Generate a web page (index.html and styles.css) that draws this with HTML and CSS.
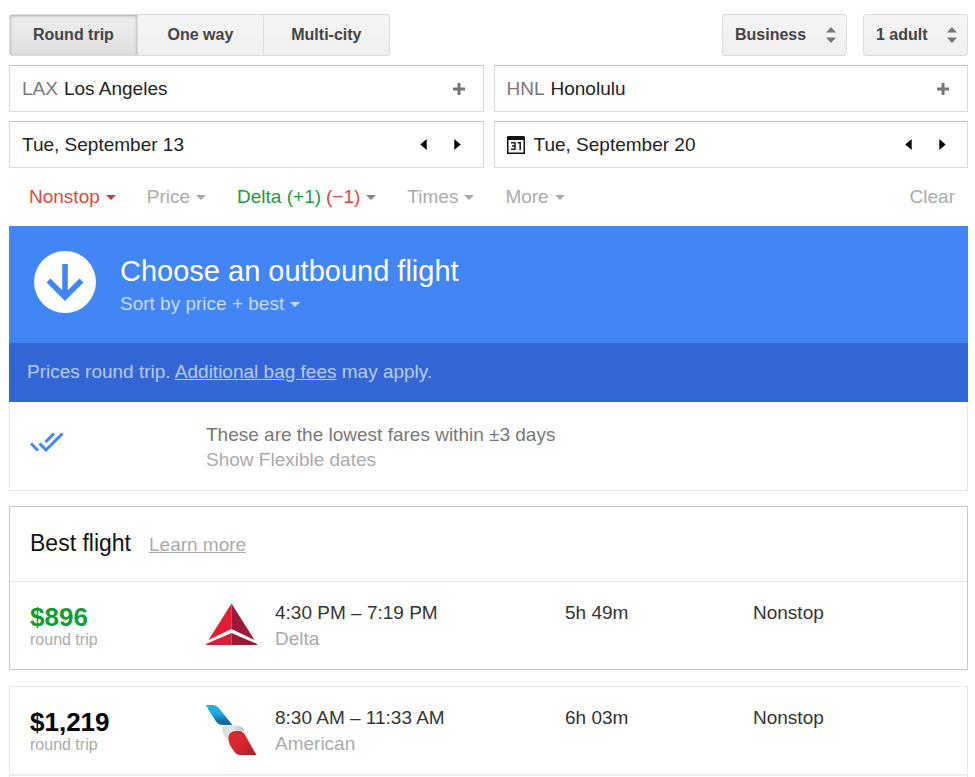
FILE: index.html
```html
<!DOCTYPE html>
<html lang="en">
<head>
<meta charset="utf-8">
<title>Flights</title>
<link rel="stylesheet" href="styles.css">
</head>
<body>
<main class="page">
  <form class="search">
    <div class="toolbar">
      <div class="tabs" role="group" aria-label="Trip type">
        <button type="button" class="tab tab-active" aria-pressed="true">Round trip</button>
        <button type="button" class="tab" aria-pressed="false">One way</button>
        <button type="button" class="tab" aria-pressed="false">Multi-city</button>
      </div>
      <div class="options">
        <div class="picker">
          <select class="picker-select picker-cabin" aria-label="Cabin class"><option>Business</option></select>
          <svg class="picker-arrows" viewBox="0 0 10 18" aria-hidden="true"><path d="M0 6.500L5 1l5 5.500zM0 11.500h10L5 17z"/></svg>
        </div>
        <div class="picker">
          <select class="picker-select picker-people" aria-label="Passengers"><option>1 adult</option></select>
          <svg class="picker-arrows" viewBox="0 0 10 18" aria-hidden="true"><path d="M0 6.500L5 1l5 5.500zM0 11.500h10L5 17z"/></svg>
        </div>
      </div>
    </div>
    <div class="fields">
      <div class="field">
        <label class="code" for="origin">LAX</label>
        <input class="field-input" id="origin" type="text" value="Los Angeles">
        <button type="button" class="add" aria-label="Add origin"><svg viewBox="0 0 12 12"><path d="M4.500 0h3v4.500H12v3H7.500V12h-3V7.500H0v-3h4.500z"/></svg></button>
      </div>
      <div class="field">
        <label class="code" for="destination">HNL</label>
        <input class="field-input" id="destination" type="text" value="Honolulu">
        <button type="button" class="add" aria-label="Add destination"><svg viewBox="0 0 12 12"><path d="M4.500 0h3v4.500H12v3H7.500V12h-3V7.500H0v-3h4.500z"/></svg></button>
      </div>
      <div class="field">
        <input class="field-input" type="text" value="Tue, September 13" aria-label="Departure date">
        <button type="button" class="step" aria-label="Previous day"><svg viewBox="0 0 7 12"><path d="M7 0v12L0 6z"/></svg></button>
        <button type="button" class="step" aria-label="Next day"><svg viewBox="0 0 7 12"><path d="M0 0v12l7-6z"/></svg></button>
      </div>
      <div class="field">
        <svg class="calendar" viewBox="0 0 18 18" aria-hidden="true">
          <path d="M1 0h16l1 1v17H0V1zM1.500 4v12.500h15V4z" fill-rule="evenodd"/>
          <path d="M4 6.700h4v6.600H4M5 10h3M10.500 6.700h2.700v7.300" class="calendar-day"/>
        </svg>
        <input class="field-input" type="text" value="Tue, September 20" aria-label="Return date">
        <button type="button" class="step" aria-label="Previous day"><svg viewBox="0 0 7 12"><path d="M7 0v12L0 6z"/></svg></button>
        <button type="button" class="step" aria-label="Next day"><svg viewBox="0 0 7 12"><path d="M0 0v12l7-6z"/></svg></button>
      </div>
    </div>
    <div class="filters">
      <button type="button" class="filter filter-red">Nonstop<span class="caret"></span></button>
      <button type="button" class="filter">Price<span class="caret"></span></button>
      <button type="button" class="filter filter-airline"><span class="plus">Delta (+1)</span> <span class="minus">(−1)</span><span class="caret"></span></button>
      <button type="button" class="filter">Times<span class="caret"></span></button>
      <button type="button" class="filter">More<span class="caret"></span></button>
      <button type="reset" class="filter filter-clear">Clear</button>
    </div>
  </form>

  <section class="outbound">
    <div class="banner">
      <svg class="banner-icon" viewBox="0 0 62 62" aria-hidden="true">
        <circle cx="31" cy="31" r="31" fill="#fff"/>
        <path d="M31 13v33M14.500 29.500L31 46l16.500-16.500" fill="none" stroke="#4285f4" stroke-width="5.500"/>
      </svg>
      <div>
        <h1 class="banner-title">Choose an outbound flight</h1>
        <button type="button" class="sort">Sort by price + best<span class="caret"></span></button>
      </div>
    </div>
    <p class="fees">Prices round trip. <a class="fees-link" href="#fees">Additional bag fees</a> may apply.</p>
    <div class="notice">
      <svg class="checks" viewBox="0 0 34 22" aria-hidden="true"><path d="M1 12.500l7 7M9.500 12.500l6.500 6.500L32.500 2.500M15.500 11l8.500-8.500"/></svg>
      <div>
        <p class="notice-text">These are the lowest fares within ±3 days</p>
        <a class="notice-link" href="#flexible">Show Flexible dates</a>
      </div>
    </div>
  </section>

  <section class="card card-best">
    <header class="card-header">
      <h2 class="card-title">Best flight</h2>
      <a class="learn" href="#learn">Learn more</a>
    </header>
    <table class="flights" aria-label="Best flight">
      <colgroup><col class="col-price"><col class="col-logo"><col class="col-time"><col class="col-duration"><col></colgroup>
      <tbody>
        <tr>
          <td><div class="price price-best">$896</div><div class="unit">round trip</div></td>
          <td>
            <svg class="logo" viewBox="0 0 52 52" aria-hidden="true">
              <path d="M25.500 3.500V29L2.500 40z" fill="#e31d35"/>
              <path d="M25.500 3.500V29l23 11z" fill="#991b35"/>
              <path d="M25.500 33v12H0v-1z" fill="#d51f38"/>
              <path d="M25.500 33v12H51v-1z" fill="#991b35"/>
            </svg>
          </td>
          <td><div class="main-text">4:30 PM – 7:19 PM</div><div class="airline">Delta</div></td>
          <td><div class="main-text">5h 49m</div></td>
          <td><div class="main-text">Nonstop</div></td>
        </tr>
      </tbody>
    </table>
  </section>

  <section class="card card-open">
    <table class="flights" aria-label="Other flights">
      <colgroup><col class="col-price"><col class="col-logo"><col class="col-time"><col class="col-duration"><col></colgroup>
      <tbody>
        <tr>
          <td><div class="price">$1,219</div><div class="unit">round trip</div></td>
          <td>
            <svg class="logo" viewBox="0 0 52 52" aria-hidden="true">
              <defs>
                <linearGradient id="wing" x1="0" y1="0" x2="0" y2="1"><stop offset=".4" stop-color="#20aee0"/><stop offset=".8" stop-color="#1767a3"/></linearGradient>
                <linearGradient id="beak" x1="0" y1="0" x2="1" y2="0"><stop offset="0" stop-color="#d3dae0"/><stop offset=".5" stop-color="#e6eaee"/><stop offset="1" stop-color="#a9bac6"/></linearGradient>
                <linearGradient id="tail" x1="0" y1="0" x2="1" y2="1"><stop offset=".4" stop-color="#d9282f"/><stop offset="1" stop-color="#b01c28"/></linearGradient>
              </defs>
              <path d="M0 0h6c4 0 6 2 8 4.500L26.500 20H17c-4 0-6-2-8-5L2.500 5C2 3.500 1 1.500 0 0z" fill="url(#wing)"/>
              <path d="M16 22c5-2 17-3 21 1 1 1 1 2 1 3-4-1-8-1-11 0-4 1-6 4-5 9-4-3-6-8-6-13z" fill="url(#beak)"/>
              <path d="M22.500 35c-1-5 2-9 7-9 4-.5 7 0 9 3l12 21H35c-4 0-6-2-8-5-2-3-4-6-4.500-10z" fill="url(#tail)"/>
            </svg>
          </td>
          <td><div class="main-text">8:30 AM – 11:33 AM</div><div class="airline">American</div></td>
          <td><div class="main-text">6h 03m</div></td>
          <td><div class="main-text">Nonstop</div></td>
        </tr>
      </tbody>
    </table>
    <div class="next-row"></div>
  </section>
</main>
</body>
</html>
```
FILE: styles.css
```css
* { box-sizing: border-box; }

body {
  margin: 0;
  background: #fff;
  color: #333;
  font-family: "Liberation Sans", Arial, sans-serif;
  font-size: 19px;
  line-height: 24px;
}

button, input, select {
  margin: 0;
  padding: 0;
  border: 0;
  background: none;
  color: inherit;
  font: inherit;
}

h1, h2, p { margin: 0; font-weight: normal; }

svg { display: block; fill: currentColor; }

.page { padding: 14px 7px 0 9px; }

.toolbar, .tabs, .options { display: flex; }
.toolbar { justify-content: space-between; margin-bottom: 9px; }
.options { gap: 16px; }

.tabs, .picker {
  height: 42px;
  border: 1px solid #dcdcdc;
  border-radius: 3px;
  background: linear-gradient(#f5f5f5, #efefef);
  color: #444;
  font-size: 16px;
  font-weight: bold;
}

.tab { min-width: 126px; padding: 0 23px; border-left: 1px solid #dcdcdc; }
.tab:first-child { border-left: 0; }
.tab-active {
  background: linear-gradient(#eee, #e0e0e0);
  box-shadow: inset 0 1px 3px rgba(0, 0, 0, .3);
}

.picker { display: flex; align-items: center; padding: 0 10px 0 12px; }
.picker-select { appearance: none; height: 40px; }
.picker-cabin { width: 91px; }
.picker-people { width: 71px; }
.picker-arrows { width: 10px; height: 18px; color: #777; pointer-events: none; }

.fields { display: grid; grid-template-columns: 1fr 1fr; gap: 9px 10px; }
.field {
  display: flex;
  align-items: center;
  height: 47px;
  padding: 0 14px 0 12px;
  border: 1px solid #d9d9d9;
  border-top-color: #c0c0c0;
}
.field-input { flex: 1; min-width: 0; color: #222; }
.code { margin-right: 6px; color: #777; }
.add { padding: 4px; color: #757575; }
.add svg { width: 12px; height: 12px; }
.step { display: grid; place-items: center; width: 34px; height: 24px; color: #000; }
.step:last-child { margin-right: -6px; }
.step svg { width: 7px; height: 11px; }
.calendar { width: 18px; height: 18px; margin-right: 9px; color: #111; }
.calendar-day { fill: none; stroke: #222; stroke-width: 1.600; }

.filters { display: flex; gap: 31px; padding: 17px 13px 17px 20px; color: #aaa; }
.filter { display: flex; align-items: center; }
.filter-red, .minus { color: #e04640; }
.filter-airline { gap: 5px; }
.plus { color: #1a9c3e; }
.filter-clear { margin-left: auto; }
.caret {
  display: inline-block;
  margin-left: 6px;
  border: 5px solid transparent;
  border-top-color: currentColor;
  border-bottom: 0;
  vertical-align: middle;
}
.filter-red .caret { color: #c53b3f; }
.filter-airline .caret { margin-left: 1px; color: #888; }

.banner {
  display: flex;
  gap: 24px;
  height: 117px;
  padding: 25px 25px 0;
  background: #4285f4;
  color: #fff;
}
.banner-icon { width: 62px; height: 62px; }
.banner-title { font-size: 29px; line-height: 40px; }
.sort { display: block; margin-top: 1px; color: #cadcfb; }
.fees { padding: 17px 18px 18px; background: #3367d6; color: #b8cbf2; }
.fees-link, .learn { color: inherit; text-decoration: underline; }

.notice {
  display: flex;
  padding: 20px 20px 18px;
  border: 1px solid #e8e8e8;
  border-top: 0;
}
.checks { width: 34px; height: 22px; margin: 9px 142px 0 0; fill: none; stroke: #4285f4; stroke-width: 3; }
.notice-text { line-height: 26px; color: #777; }
.notice-link { display: block; line-height: 24px; color: #aaa; text-decoration: none; }

.card { margin-top: 16px; border: 1px solid #e8e8e8; }
.card-best { margin-top: 15px; border-color: #c8c8c8; }
.card-open { border-bottom: 0; }
.card-header {
  display: flex;
  align-items: baseline;
  gap: 18px;
  padding: 20px 20px 22px;
  border-bottom: 1px solid #e8e8e8;
}
.card-title { font-size: 23px; line-height: 32px; color: #111; }
.learn { color: #aaa; }

.flights { width: 100%; border-collapse: collapse; table-layout: fixed; }
.flights td { height: 87px; padding: 0; vertical-align: top; }
.flights td:first-child { padding-left: 20px; }
.col-price { width: 196px; }
.col-logo { width: 69px; }
.col-time { width: 290px; }
.col-duration { width: 188px; }
.price { padding-top: 21px; font-size: 26px; line-height: 28px; font-weight: bold; color: #000; }
.price-best { color: #0f9d34; }
.unit { font-size: 16px; line-height: 18px; color: #aaa; }
.logo { width: 52px; height: 52px; margin-top: 18px; }
.main-text { padding-top: 18px; line-height: 26px; }
.airline { line-height: 25px; color: #aaa; }
.next-row { height: 3px; border-top: 2px solid #ececec; }
```
